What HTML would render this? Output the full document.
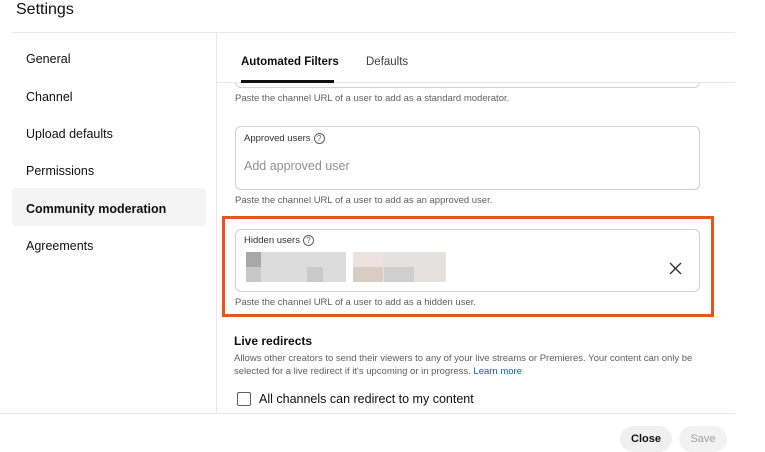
<!DOCTYPE html>
<html><head><style>
*{margin:0;padding:0;box-sizing:border-box}
body{width:765px;height:450px;background:#fff;font-family:"Liberation Sans",Arial,sans-serif;color:#0f0f0f;position:relative;overflow:hidden}
.a{position:absolute;white-space:nowrap}
.nav{left:26px;font-size:12.5px}
.help{font-size:9.5px;color:#606060}
.box{position:absolute;border:1px solid #d0d0d0;border-radius:6px;background:#fff}
.q{display:inline-block;width:11px;height:11px;border:1px solid #606060;border-radius:50%;font-size:8px;text-align:center;line-height:9px;color:#606060;vertical-align:middle;margin-left:3px}
.px{position:absolute;width:16px;height:16px}
</style></head><body>
<div class="a" style="left:16px;top:0;font-size:16px;line-height:20px">Settings</div>
<div class="a" style="left:12px;top:32px;width:723px;height:1px;background:#e8e8e8"></div>
<div class="a" style="left:216px;top:33px;width:1px;height:380px;background:#e8e8e8"></div>
<div class="a" style="left:12px;top:188px;width:194px;height:38px;background:#f4f4f4;border-radius:4px"></div>
<div class="a nav" style="top:52px">General</div>
<div class="a nav" style="top:90px">Channel</div>
<div class="a nav" style="top:127px">Upload defaults</div>
<div class="a nav" style="top:164px">Permissions</div>
<div class="a nav" style="top:202px;font-weight:bold">Community moderation</div>
<div class="a nav" style="top:239px">Agreements</div>

<div class="box" style="left:235px;top:60px;width:465px;height:28px"></div>
<div class="a" style="left:217px;top:33px;width:518px;height:50px;background:#fff;border-bottom:1px solid #e8e8e8"></div>
<div class="a" style="left:241px;top:56px;font-size:11.5px;font-weight:bold">Automated Filters</div>
<div class="a" style="left:241px;top:80px;width:93px;height:3px;background:#0f0f0f"></div>
<div class="a" style="left:366px;top:56px;font-size:11.5px;color:#404040">Defaults</div>

<div class="a help" style="left:235px;top:93px">Paste the channel URL of a user to add as a standard moderator.</div>
<div class="box" style="left:235px;top:126px;width:465px;height:64px"></div>
<div class="a" style="left:244px;top:133px;font-size:9.5px;color:#303030">Approved users<span class="q">?</span></div>
<div class="a" style="left:244px;top:159px;font-size:12.5px;color:#909090">Add approved user</div>
<div class="a help" style="left:235px;top:195px">Paste the channel URL of a user to add as an approved user.</div>

<div class="a" style="left:222px;top:216px;width:492px;height:101px;border:3px solid #e8541c"></div>
<div class="box" style="left:235px;top:229px;width:465px;height:63px"></div>
<div class="a" style="left:244px;top:235px;font-size:9.5px;color:#303030">Hidden users<span class="q">?</span></div>
<div class="a" style="left:246px;top:252px;width:100px;height:30px;background:#dcdcdc"></div>
<div class="px" style="left:246px;top:252px;background:#a8a8a8;height:15px;width:15px"></div>
<div class="px" style="left:246px;top:267px;background:#c8c8c8;height:15px;width:15px"></div>
<div class="px" style="left:307px;top:267px;background:#cacaca;height:15px"></div>
<div class="a" style="left:353px;top:252px;width:93px;height:30px;background:#e4e2e0"></div>
<div class="px" style="left:353px;top:267px;background:#d8ccc4;height:15px;width:30px"></div>
<div class="px" style="left:353px;top:252px;background:#ece4dc;height:15px;width:30px"></div>
<div class="px" style="left:384px;top:267px;background:#cfcfcf;height:15px;width:30px"></div>
<svg class="a" style="left:669px;top:262px" width="13" height="13" viewBox="0 0 13 13"><path d="M1 1L12 12M12 1L1 12" stroke="#303030" stroke-width="1.3"/></svg>
<div class="a help" style="left:235px;top:297px">Paste the channel URL of a user to add as a hidden user.</div>

<div class="a" style="left:234px;top:334px;font-size:12px;font-weight:bold">Live redirects</div>
<div class="a help" style="left:234px;top:352px;line-height:13px">Allows other creators to send their viewers to any of your live streams or Premieres. Your content can only be<br>selected for a live redirect if it's upcoming or in progress. <span style="color:#065fd4">Learn more</span></div>
<div class="a" style="left:237px;top:392px;width:14px;height:14px;border:1.5px solid #606060;border-radius:2px"></div>
<div class="a" style="left:259px;top:392px;font-size:12.5px">All channels can redirect to my content</div>
<div class="a" style="left:0;top:413px;width:735px;height:1px;background:#e8e8e8"></div>
<div class="a" style="left:620px;top:426px;width:52px;height:26px;border-radius:13px;background:#f0f0f0;font-size:11px;font-weight:bold;text-align:center;line-height:26px">Close</div>
<div class="a" style="left:679px;top:426px;width:48px;height:26px;border-radius:13px;background:#f2f2f2;font-size:11px;color:#a0a0a0;text-align:center;line-height:26px">Save</div>
</body></html>
